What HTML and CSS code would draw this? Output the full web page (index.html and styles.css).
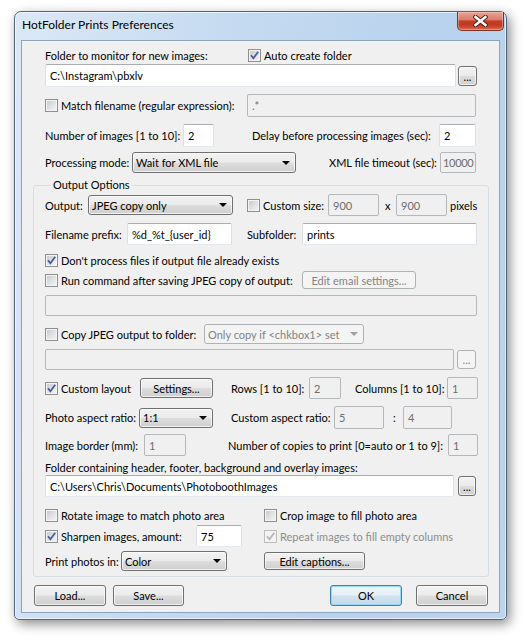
FILE: index.html
```html
<!DOCTYPE html>
<html>
<head>
<meta charset="utf-8">
<title>HotFolder Prints Preferences</title>
<link rel="stylesheet" href="styles.css">
</head>
<body>
<div class="window">
  <div class="titlebar">
    <span class="title">HotFolder Prints Preferences</span>
    <span class="close"><svg width="15" height="12" viewBox="0 0 15 12"><path d="M2.5 2 L12.5 10 M12.5 2 L2.5 10" stroke="#4a2520" stroke-width="4.4" stroke-linecap="square" fill="none"/><path d="M2.5 2 L12.5 10 M12.5 2 L2.5 10" stroke="#ffffff" stroke-width="2.4" stroke-linecap="square" fill="none"/></svg></span>
  </div>
  <div class="client">
    <div class="top">
      <div class="row r1">
        <span>Folder to monitor for new images:</span>
        <span class="chk"><span class="box"><svg class="tick" viewBox="0 0 11 11"><path d="M2 5.3 L4.4 8.3 L9.2 1.8"/></svg></span>Auto create folder</span>
      </div>
      <div class="row r2">
        <span class="tb">C:\Instagram\pbxlv</span>
        <span class="btn dots">...</span>
      </div>
      <div class="row r3">
        <span class="chk"><span class="box"></span>Match filename (regular expression):</span>
        <span class="tb dis">.*</span>
      </div>
      <div class="row r4">
        <span>Number of images [1 to 10]:</span>
        <span class="tb w31">2</span>
        <span>Delay before processing images (sec):</span>
        <span class="tb">2</span>
      </div>
      <div class="row r5">
        <span>Processing mode:</span>
        <span class="combo w164">Wait for XML file<i class="arrow"></i></span>
        <span>XML file timeout (sec):</span>
        <span class="tb dis tight">10000</span>
      </div>
    </div>

    <fieldset class="group">
      <legend>Output Options</legend>
      <div class="row g1">
        <span>Output:</span>
        <span class="combo w145">JPEG copy only<i class="arrow"></i></span>
        <span class="chk"><span class="box"></span>Custom size:</span>
        <span class="tb dis w51">900</span>
        <span>x</span>
        <span class="tb dis w51">900</span>
        <span>pixels</span>
      </div>
      <div class="row g2">
        <span>Filename prefix:</span>
        <span class="tb w105">%d_%t_{user_id}</span>
        <span>Subfolder:</span>
        <span class="tb">prints</span>
      </div>
      <div class="row g3">
        <span class="chk"><span class="box"><svg class="tick" viewBox="0 0 11 11"><path d="M2 5.3 L4.4 8.3 L9.2 1.8"/></svg></span>Don't process files if output file already exists</span>
      </div>
      <div class="row g4">
        <span class="chk"><span class="box"></span>Run command after saving JPEG copy of output:</span>
        <span class="btn off w114">Edit email settings...</span>
      </div>
      <div class="row g5">
        <span class="tb dis"></span>
      </div>
      <div class="row g6">
        <span class="chk"><span class="box"></span>Copy JPEG output to folder:</span>
        <span class="combo off w160">Only copy if &lt;chkbox1&gt; set<i class="arrow"></i></span>
      </div>
      <div class="row g7">
        <span class="tb dis"></span>
        <span class="btn off dots">...</span>
      </div>
      <div class="row g8">
        <span class="chk"><span class="box"><svg class="tick" viewBox="0 0 11 11"><path d="M2 5.3 L4.4 8.3 L9.2 1.8"/></svg></span>Custom layout</span>
        <span class="btn w73">Settings...</span>
        <span>Rows [1 to 10]:</span>
        <span class="tb dis w32">2</span>
        <span>Columns [1 to 10]:</span>
        <span class="tb dis">1</span>
      </div>
      <div class="row g9">
        <span>Photo aspect ratio:</span>
        <span class="combo w74">1:1<i class="arrow"></i></span>
        <span>Custom aspect ratio:</span>
        <span class="tb dis w50">5</span>
        <span>:</span>
        <span class="tb dis">4</span>
      </div>
      <div class="row g10">
        <span>Image border (mm):</span>
        <span class="tb dis w42">1</span>
        <span>Number of copies to print [0=auto or 1 to 9]:</span>
        <span class="tb dis">1</span>
      </div>
      <div class="row g11">
        <span>Folder containing header, footer, background and overlay images:</span>
      </div>
      <div class="row g12">
        <span class="tb">C:\Users\Chris\Documents\PhotoboothImages</span>
        <span class="btn dots">...</span>
      </div>
      <div class="row g13">
        <span class="chk"><span class="box"></span>Rotate image to match photo area</span>
        <span class="chk"><span class="box"></span>Crop image to fill photo area</span>
      </div>
      <div class="row g14">
        <span class="chk"><span class="box"><svg class="tick" viewBox="0 0 11 11"><path d="M2 5.3 L4.4 8.3 L9.2 1.8"/></svg></span>Sharpen images, amount:</span>
        <span class="tb w46">75</span>
        <span class="chk off"><span class="box"><svg class="tick" viewBox="0 0 11 11"><path d="M2 5.3 L4.4 8.3 L9.2 1.8"/></svg></span>Repeat images to fill empty columns</span>
      </div>
      <div class="row g15">
        <span>Print photos in:</span>
        <span class="combo w106">Color<i class="arrow"></i></span>
        <span class="btn w101">Edit captions...</span>
      </div>
    </fieldset>

    <div class="actions">
      <span class="btn w72">Load...</span>
      <span class="btn w71">Save...</span>
      <span class="spacer"></span>
      <span class="btn default w72">OK</span>
      <span class="btn w72">Cancel</span>
    </div>
  </div>
</div>
</body>
</html>
```

FILE: styles.css
```css
* { box-sizing: border-box; }
html, body { margin: 0; padding: 0; }
body {
  width: 526px;
  height: 638px;
  overflow: hidden;
  background: #ffffff;
  font-family: Lato, "Open Sans", "DejaVu Sans", sans-serif;
  font-size: 11px;
  color: #000;
  white-space: nowrap;
}

.window {
  margin: 11px 0 0 14px;
  width: 493px;
  height: 609px;
  border: 1px solid #55657c;
  border-radius: 7px 7px 5px 5px;
  background: linear-gradient(100deg, #dbe8f6 0%, #c6dbf1 35%, #b9d2ed 70%, #bcd4ee 100%);
  box-shadow: 3px 4px 12px rgba(0, 0, 0, 0.45), inset 0 0 0 1px rgba(255, 255, 255, 0.6);
  display: flex;
  flex-direction: column;
}

.titlebar {
  height: 28px;
  display: flex;
  justify-content: space-between;
  align-items: flex-start;
  padding-left: 7px;
}
.title {
  font-size: 12px;
  line-height: 26px;
  color: #000;
}
.close {
  width: 47px;
  height: 19px;
  margin-right: 2px;
  border: 1px solid #7a3128;
  border-top: none;
  border-radius: 0 0 5px 5px;
  background: linear-gradient(#e7a597 0%, #db7d6b 42%, #c63e2a 50%, #c0391f 72%, #d56a52 100%);
  box-shadow: inset 0 0 0 1px rgba(255, 210, 200, 0.45);
  display: flex;
  align-items: center;
  justify-content: center;
}

.client {
  margin: 0 6px;
  height: 573px;
  border: 1px solid #8ea3bc;
  background: #f0f0f0;
  padding-top: 6px;
}

.top { padding-left: 23px; }

.row {
  display: grid;
  align-items: center;
}

/* top section rows */
.r1 { height: 17px; grid-template-columns: 203px auto; }
.r2 { height: 23px; grid-template-columns: 411px 19px; column-gap: 2px; }
.r3 { height: 23px; margin-top: 7px; grid-template-columns: 202px 229px; }
.r4 { height: 23px; margin-top: 7px; grid-template-columns: 138px 69px 187px 37px; }
.r5 { height: 21px; margin-top: 5px; grid-template-columns: 87px 197px 111px 36px; }

/* group box */
.group {
  margin: 4px 0 0 11px;
  width: 456px;
  padding: 0 0 5px 11px;
  border: 1px solid #d5dfe5;
  border-radius: 3px;
  min-inline-size: 0;
}
.group legend {
  margin-left: 6px;
  padding: 0 2px;
  line-height: 16px;
  height: 16px;
}

.g1 { height: 22px; margin-top: 1px; grid-template-columns: 43px 159px 81px 57px 11px 54px auto; }
.g2 { height: 22px; margin-top: 7px; grid-template-columns: 82px 120px 55px 175px; }
.g3 { height: 16px; margin-top: 7px; }
.g4 { height: 20px; margin-top: 2px; grid-template-columns: 257px auto; }
.g5 { height: 21px; margin-top: 5px; grid-template-columns: 432px; }
.g6 { height: 20px; margin-top: 8px; grid-template-columns: 159px auto; }
.g7 { height: 21px; margin-top: 5px; grid-template-columns: 409px 19px; column-gap: 3px; }
.g8 { height: 22px; margin-top: 7px; grid-template-columns: 95px 91px 78px 46px 92px 31px; }
.g9 { height: 23px; margin-top: 7px; grid-template-columns: 94px 92px 103px 59px 10px 49px; }
.g10 { height: 22px; margin-top: 5px; grid-template-columns: 99px 84px 220px 30px; }
.g11 { height: 14px; margin-top: 4px; }
.g12 { height: 22px; margin-top: 1px; grid-template-columns: 409px 18px; column-gap: 4px; }
.g13 { height: 14px; margin-top: 11px; grid-template-columns: 219px auto; }
.g14 { height: 22px; margin-top: 3px; grid-template-columns: 151px 68px auto; }
.g15 { height: 20px; margin-top: 4px; grid-template-columns: 76px 143px 101px; }

/* text boxes */
.tb {
  align-self: stretch;
  display: flex;
  align-items: center;
  padding-left: 4px;
  background: #fff;
  border: 1px solid #dbdfe6;
  border-top-color: #abadb3;
  border-bottom-color: #e3e9ef;
  border-radius: 2px;
  overflow: hidden;
}
.tb.dis {
  background: #f0f0f0;
  border-color: #b5b8bb;
  color: #6d6d6d;
}
.tb.tight {
  padding-left: 2px;
  letter-spacing: -0.3px;
}

/* widths */
.w31 { width: 31px; }
.w32 { width: 32px; }
.w42 { width: 42px; }
.w46 { width: 46px; }
.w50 { width: 50px; }
.w51 { width: 51px; }
.w71 { width: 71px; }
.w72 { width: 72px; }
.w73 { width: 73px; }
.w74 { width: 74px; }
.w101 { width: 101px; }
.w105 { width: 105px; }
.w106 { width: 106px; }
.w114 { width: 114px; }
.w145 { width: 145px; }
.w160 { width: 160px; }
.w164 { width: 164px; }

/* buttons */
.btn {
  height: 20px;
  display: flex;
  align-items: center;
  justify-content: center;
  border: 1px solid #707070;
  border-radius: 3px;
  background: linear-gradient(#f2f2f2 0%, #ebebeb 48%, #dddddd 52%, #cfcfcf 100%);
  box-shadow: inset 0 0 0 1px rgba(255, 255, 255, 0.7);
  color: #000;
}
.btn.off {
  border-color: #adb2b5;
  background: #f4f4f4;
  box-shadow: none;
  color: #838383;
}
.btn.dots {
  height: 20px;
  align-items: flex-end;
  padding-bottom: 3px;
  line-height: 1;
}
.g4 .btn { height: 18px; }
.g7 .btn.dots { height: 19px; }
.g15 .btn { height: 18px; }
.btn.default {
  border-color: #3c7fb1;
  box-shadow: inset 0 0 0 1px #9ad6f5;
  background: linear-gradient(#eef6fb 0%, #e4eff7 48%, #d3e3ef 52%, #c5d9e8 100%);
}

/* combo boxes */
.combo {
  height: 20px;
  display: flex;
  align-items: center;
  justify-content: space-between;
  padding: 0 5px 0 3px;
  border: 1px solid #707070;
  border-radius: 3px;
  background: linear-gradient(#f2f2f2 0%, #ebebeb 48%, #dddddd 52%, #cfcfcf 100%);
  box-shadow: inset 0 0 0 1px rgba(255, 255, 255, 0.7);
}
.r5 .combo { height: 21px; }
.combo.off {
  border-color: #adb2b5;
  background: #f4f4f4;
  box-shadow: none;
  color: #838383;
}
.arrow {
  width: 0;
  height: 0;
  border-left: 4px solid transparent;
  border-right: 4px solid transparent;
  border-top: 4px solid #000;
}
.combo.off .arrow { border-top-color: #a0a0a0; }

/* checkboxes */
.chk {
  display: flex;
  align-items: center;
  gap: 3px;
}
.box {
  width: 13px;
  height: 13px;
  flex: none;
  border: 1px solid #8e8f8f;
  background: linear-gradient(135deg, #c3c7cc 0%, #e2e3e5 55%, #f6f6f6 100%);
  box-shadow: inset 0 0 0 1px #f4f4f4;
  display: flex;
  align-items: center;
  justify-content: center;
}
.tick { width: 11px; height: 11px; }
.tick path {
  fill: none;
  stroke: #4a5f97;
  stroke-width: 1.8;
}
.chk.off { color: #8d8d8d; }
.chk.off .box {
  border-color: #bcbcbc;
  background: #f4f4f4;
}
.chk.off .tick path { stroke: #b5b5b5; }

/* bottom actions */
.actions {
  display: flex;
  height: 21px;
  margin: 8px 11px 0 12px;
}
.actions .btn { height: 21px; }
.actions .btn + .btn { margin-left: 7px; }
.actions .spacer { flex: 1; }
.actions .default + .btn { margin-left: 14px; }
.actions .spacer + .btn { margin-left: 0; }
```
